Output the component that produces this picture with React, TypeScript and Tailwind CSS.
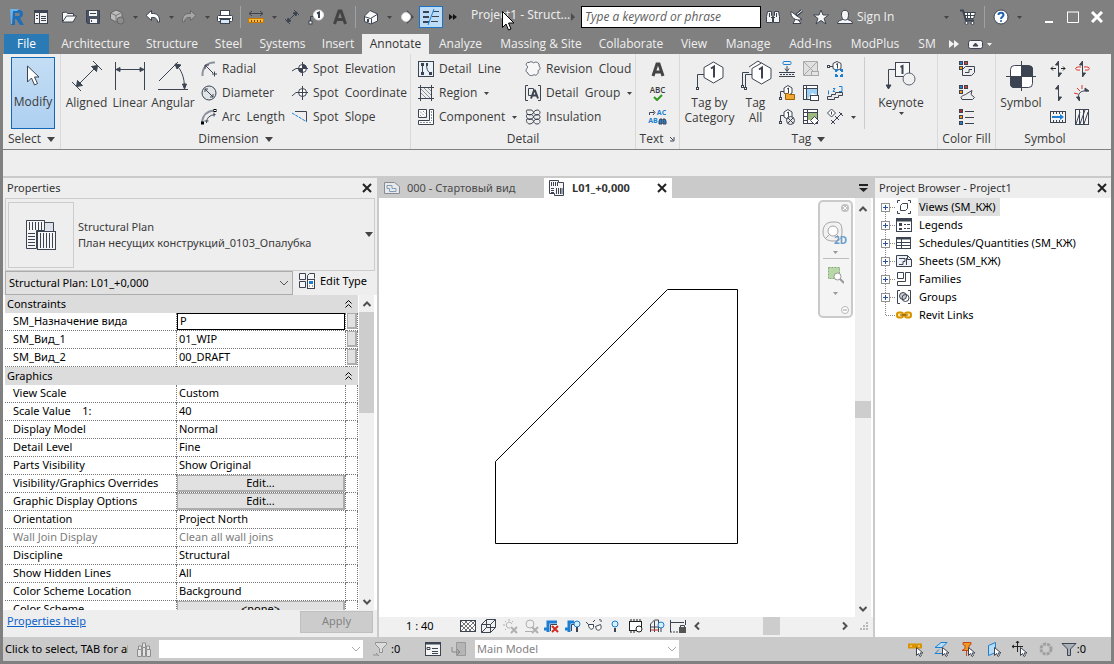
import type { ReactNode } from "react";

const INK = "#3c4452";
const BLUE = "#1b7fd4";

function Icon({
  size = 16,
  w,
  h,
  children,
}: {
  size?: number;
  w?: number;
  h?: number;
  children: ReactNode;
}) {
  const width = w ?? size;
  const height = h ?? size;
  return (
    <svg
      width={width}
      height={height}
      viewBox={`0 0 ${width} ${height}`}
      fill="none"
      stroke={INK}
      className="shrink-0"
      aria-hidden="true"
    >
      {children}
    </svg>
  );
}

function Caret({ color = "#444444" }: { color?: string }) {
  return (
    <Icon w={5} h={3}>
      <path d="M0 0h5L2.5 3z" fill={color} stroke="none" />
    </Icon>
  );
}

function BigCaret({ color = "#444444" }: { color?: string }) {
  return (
    <Icon w={8} h={5}>
      <path d="M0 0h8L4 5z" fill={color} stroke="none" />
    </Icon>
  );
}

function CloseIcon() {
  return (
    <Icon size={10}>
      <path d="M1 1l8 8M9 1L1 9" stroke="#222" strokeWidth="2" />
    </Icon>
  );
}

function Chevron({ dir, color = "#505050" }: { dir: "up" | "down" | "left" | "right"; color?: string }) {
  const paths = {
    up: "M1.500 7L5 3.500 8.500 7",
    down: "M1.500 3L5 6.500 8.500 3",
    left: "M7 1.500L3.500 5 7 8.500",
    right: "M3 1.500L6.500 5 3 8.500",
  };
  return (
    <Icon size={10}>
      <path d={paths[dir]} stroke={color} strokeWidth="2" />
    </Icon>
  );
}

/* ---------- title bar ---------- */

function QuickButton({ label, children }: { label: string; children: ReactNode }) {
  return (
    <button type="button" aria-label={label} className="flex h-6 w-6 items-center justify-center">
      {children}
    </button>
  );
}

function DropButton({ label }: { label: string }) {
  return (
    <button type="button" aria-label={label} className="flex h-6 w-3 items-center justify-center">
      <Caret />
    </button>
  );
}

function Divider() {
  return <div className="mx-[3px] h-[22px] w-px bg-[#9ba3a5]" />;
}

function TitleBar() {
  return (
    <header className="flex h-[34px] shrink-0 items-center pl-[5px]">
      <QuickButton label="Application menu">
        <Icon>
          <path d="M3 1h7c3 0 4 2 4 4s-1 3-3 4l4 7h-4l-4-6H6v6H2V3z" fill="#1f6fb8" stroke="none" />
          <path d="M6 4h4c1 0 1 3 0 3H6z" fill="#808080" stroke="none" />
          <path d="M1 0h9l-2 2H4L3 15H2z" fill="#6bb3ea" stroke="none" />
        </Icon>
      </QuickButton>
      <QuickButton label="Properties">
        <Icon>
          <rect x="1.5" y="1.5" width="13" height="13" fill="#f2f2f2" />
          <path d="M2 3h12" strokeWidth="2" />
          <path d="M6.5 4v10M8 7.5h5M8 9.5h5M8 11.5h5M3 6.5h2M3 9.5h2" />
        </Icon>
      </QuickButton>
      <div className="flex pl-1">
        <QuickButton label="Open">
          <Icon>
            <path d="M1.5 13V3.500l4-.5 1 1.500h6v3" fill="#f7f7f7" />
            <path d="M1.500 13l4-6h10l-3.500 6z" fill="#f7f7f7" />
          </Icon>
        </QuickButton>
        <QuickButton label="Save">
          <Icon>
            <path d="M1.5 1.500h13v13h-12l-1-1z" fill="#4a5363" />
            <rect x="4" y="2" width="8" height="5" fill="#f4f4f4" stroke="none" />
            <rect x="5" y="10" width="7" height="4" fill="#f4f4f4" stroke="none" />
            <path d="M5 4.500h6M6.500 11v2" />
          </Icon>
        </QuickButton>
        <QuickButton label="Synchronize">
          <Icon>
            <path d="M1.500 4L7 1l6 2.500v6L7 13l-5.500-3z" fill="#bcbcbc" stroke="#666" />
            <path d="M1.500 4L7 6.500l6-3M7 6.500V13" stroke="#777" />
            <circle cx="11.500" cy="11.500" r="3.500" fill="#8d8d8d" stroke="#666" />
          </Icon>
        </QuickButton>
        <DropButton label="Synchronize options" />
        <QuickButton label="Undo">
          <Icon>
            <path d="M1 6.500L6.500 1.500v3C12 4 15 7 14.500 13h-2c0-3-2-5-6-4.500v3z" fill="#fff" />
          </Icon>
        </QuickButton>
        <DropButton label="Undo list" />
        <QuickButton label="Redo">
          <Icon>
            <path d="M15 6.500L9.500 1.500v3C4 4 1 7 1.500 13h2c0-3 2-5 6-4.500v3z" fill="#a5a5a5" stroke="#6a6a6a" />
          </Icon>
        </QuickButton>
        <DropButton label="Redo list" />
        <QuickButton label="Print">
          <Icon>
            <rect x="3.500" y="1.500" width="9" height="6" fill="#fff" />
            <rect x=".5" y="6.500" width="15" height="6" rx="1" fill="#fff" />
            <rect x="3.500" y="10.500" width="9" height="4" fill="#d9e8f5" />
            <path d="M2 9.500h12" />
          </Icon>
        </QuickButton>
      </div>
      <Divider />
      <div className="flex">
        <QuickButton label="Measure">
          <Icon>
            <path d="M1 4.500h14M4 2L1 4.500 4 7M12 2l3 2.500L12 7" />
            <rect x=".5" y="9.500" width="15" height="4" fill="#f6b73c" stroke="#c47a00" />
            <path d="M3.500 11v2M6.500 11v2M9.500 11v2M12.500 11v2" stroke="#7a4d00" />
          </Icon>
        </QuickButton>
        <DropButton label="Measure options" />
        <QuickButton label="Aligned dimension">
          <Icon>
            <path d="M3 13L13 3M1 10l5 5M10 1l5 5" />
            <path d="M3 13l1-4 3 3zM13 3l-1 4-3-3z" fill={INK} />
          </Icon>
        </QuickButton>
        <QuickButton label="Tag by category">
          <Icon>
            <path d="M2.500 13V7.500H6" />
            <rect x="1" y="12" width="3" height="3" fill="#fff" />
            <circle cx="10.500" cy="6" r="5" fill="#fff" stroke="#e5e5e5" />
            <path d="M9 4.500l2-1V9" strokeWidth="2" />
          </Icon>
        </QuickButton>
        <QuickButton label="Text">
          <Icon>
            <path d="M2.500 15L7 2h2l4.500 13M4 10.500h8" strokeWidth="3" stroke="#444" />
          </Icon>
        </QuickButton>
      </div>
      <Divider />
      <div className="flex items-center">
        <QuickButton label="Default 3D view">
          <Icon>
            <path d="M1.500 7L7 1.500 14.500 5v7L8 15l-6.500-2.500z" fill="#f8f8f8" />
            <path d="M1 7.500l6.500 2L15 5M8.500 9.500V15" />
            <path d="M5 10v3" strokeWidth="2" />
          </Icon>
        </QuickButton>
        <DropButton label="3D view options" />
        <QuickButton label="Section">
          <Icon>
            <path d="M8 1l7 7-7 7z" fill="#4a4f59" stroke="none" />
            <circle cx="7" cy="8" r="4.500" fill="#fff" stroke="#d0d0d0" />
          </Icon>
        </QuickButton>
        <button
          type="button"
          aria-label="Thin lines"
          aria-pressed="true"
          className="flex h-[22px] w-6 items-center justify-center border border-[#1d74c4] bg-[#bcdcf7]"
        >
          <Icon>
            <path d="M0 3h6M0 8h6M0 13h6" strokeWidth="2" />
            <path d="M10 2.500h6M9 7.500h7M8 12.500h7" />
            <path d="M11 0L5 16" stroke={BLUE} />
          </Icon>
        </button>
        <button type="button" aria-label="Customize" className="flex h-6 w-5 items-center justify-center">
          <Icon w={8} h={6}>
            <path d="M0 0l4 3-4 3zM4 0l4 3-4 3z" fill="#111" stroke="none" />
          </Icon>
        </button>
      </div>
      <h1 className="ml-2 w-[100px] shrink-0 whitespace-nowrap pb-1 text-xs text-[#ececec]">Project1 - Struct...</h1>
      <Icon w={4} h={8}>
        <path d="M0 0l4 4-4 4z" fill="#4d4d4d" stroke="none" />
      </Icon>
      <input
        type="text"
        aria-label="Search"
        placeholder="Type a keyword or phrase"
        className="ml-[6px] h-[22px] w-[180px] border border-black bg-white px-[3px] pb-px font-['Open_Sans',sans-serif] text-xs italic placeholder:text-[#5e5e5e]"
      />
      <div className="flex">
        <QuickButton label="Find">
          <Icon>
            <path d="M2.500 2.500h4v4l1 1v6h-6v-6zM9.500 2.500h4l1 5v6h-6v-6l1-1z" fill="#f2f2f2" />
            <path d="M6 8.500h4M4.500 4v4M11.500 4v4" />
          </Icon>
        </QuickButton>
        <QuickButton label="Communication center">
          <Icon>
            <path d="M4 14.500h8L8.500 10h-2z" fill="#fff" />
            <path d="M2 2.500c-1 6 5 10 11 8z" fill="#fff" />
            <path d="M7 6.500l6-5" strokeWidth="3" />
            <path d="M8 5.500l5-4" stroke="#fff" />
          </Icon>
        </QuickButton>
        <QuickButton label="Favorites">
          <Icon>
            <path d="M8 1l2 5h5.500l-4.500 3.500 2 5.500-5-3.500L3 15l2-5.500L.5 6H6z" fill="#f6f6f6" />
          </Icon>
        </QuickButton>
        <button type="button" className="flex h-6 items-center gap-1 pl-1 font-['Open_Sans',sans-serif] text-xs text-[#f0f0f0]">
          <Icon>
            <path d="M.5 14.500c0-3 3-3 5-4h5c2 1 5 1 5 4z" fill="#f6f6f6" />
            <path d="M4.500 5c0-5 7-5 7 0s-1.500 6-3.500 6-3.500-2-3.500-6z" fill="#f6f6f6" />
          </Icon>
          Sign In
        </button>
      </div>
      <div className="ml-auto flex items-center pr-[5px]">
        <DropButton label="Account options" />
        <div className="w-1" />
        <QuickButton label="App store">
          <Icon>
            <path d="M4 3.500h11.500l-2 6H5.500z" fill="#fff" />
            <path d="M0 1.500h3l3 10h8" strokeWidth="2" />
            <path d="M7.500 4v5M10.500 4v5M5 6.500h9" />
            <circle cx="6.500" cy="14" r="1.500" fill="#fff" />
            <circle cx="12.500" cy="14" r="1.500" fill="#fff" />
          </Icon>
        </QuickButton>
        <div className="px-px">
          <Divider />
        </div>
        <QuickButton label="Help">
          <Icon>
            <circle cx="8" cy="8" r="7" fill="#fff" />
            <path d="M5.500 6c0-3 5-3 5 0 0 1.500-2.500 2-2.500 4" stroke="#1b62b5" strokeWidth="2" />
            <circle cx="8" cy="12" r="1" fill="#1b62b5" stroke="none" />
          </Icon>
        </QuickButton>
        <DropButton label="Help options" />
        <div className="flex pl-3">
          <QuickButton label="Minimize">
            <Icon w={10} h={14}>
              <path d="M1 12h8" stroke="#fff" strokeWidth="2" />
            </Icon>
          </QuickButton>
          <QuickButton label="Maximize">
            <Icon w={12} h={12}>
              <path d="M.5 1v10.500h11V1M0 1h12" stroke="#fff" />
            </Icon>
          </QuickButton>
          <QuickButton label="Close">
            <Icon w={12} h={12}>
              <path d="M1 1l10 10M11 1L1 11" stroke="#fff" strokeWidth="3" />
            </Icon>
          </QuickButton>
        </div>
      </div>
    </header>
  );
}

/* ---------- ribbon tabs ---------- */

const tabs = [
  { label: "File", width: "w-[45px] mr-1" },
  { label: "Architecture", width: "w-[85px]" },
  { label: "Structure", width: "w-[68px]" },
  { label: "Steel", width: "w-[45px]" },
  { label: "Systems", width: "w-[63px]" },
  { label: "Insert", width: "w-[48px]" },
  { label: "Annotate", width: "w-[67px]" },
  { label: "Analyze", width: "w-[63px]" },
  { label: "Massing & Site", width: "w-[98px]" },
  { label: "Collaborate", width: "w-[82px]" },
  { label: "View", width: "w-[44px]" },
  { label: "Manage", width: "w-[64px]" },
  { label: "Add-Ins", width: "w-[61px]" },
  { label: "ModPlus", width: "w-[68px]" },
  { label: "SM", width: "w-[36px]" },
];

function RibbonTabs() {
  return (
    <nav className="flex h-5 shrink-0 items-stretch pl-1 font-['Open_Sans','Noto_Sans',sans-serif] text-xs">
      {tabs.map((tab) => {
        const tone =
          tab.label === "Annotate"
            ? "bg-[#eeeeee] text-[#333333]"
            : tab.label === "File"
              ? "bg-[#2a7ab5] text-white"
              : "text-[#f0f0f0]";
        return (
          <button key={tab.label} type="button" className={`shrink-0 whitespace-nowrap ${tab.width} ${tone}`}>
            {tab.label}
          </button>
        );
      })}
      <button type="button" aria-label="More tabs" className="flex w-[18px] items-center justify-center">
        <Icon w={10} h={8}>
          <path d="M0 0l5 4-5 4zM5 0l5 4-5 4z" fill="#f4f4f4" stroke="none" />
        </Icon>
      </button>
      <button type="button" aria-label="Minimize ribbon" className="flex items-center gap-1 pl-[5px]">
        <Icon w={15} h={9}>
          <rect x=".5" y=".5" width="14" height="8" rx="2" fill="#f4f4f4" />
          <path d="M5 6l2.500-3L10 6z" fill={INK} />
        </Icon>
        <Caret color="#f4f4f4" />
      </button>
    </nav>
  );
}

/* ---------- ribbon ---------- */

function Panel({
  title,
  width,
  caret,
  launcher,
  children,
}: {
  title: string;
  width: string;
  caret?: boolean;
  launcher?: boolean;
  children: ReactNode;
}) {
  return (
    <section className={`flex shrink-0 flex-col border-r border-[#d9d9d9] pt-[3px] ${width}`}>
      <div className="flex h-[72px]">{children}</div>
      <div className="flex h-5 items-center justify-center gap-[6px] whitespace-nowrap">
        {title}
        {caret ? <BigCaret /> : null}
        {launcher ? (
          <Icon size={6}>
            <path d="M1 1l3 3M5 1v4H1" />
          </Icon>
        ) : null}
      </div>
    </section>
  );
}

function BigButton({
  label,
  width,
  caret,
  children,
}: {
  label: string;
  width: string;
  caret?: boolean;
  children: ReactNode;
}) {
  return (
    <button type="button" className={`flex h-[72px] shrink-0 flex-col items-center ${width}`}>
      <span className="flex h-[38px] items-center justify-center">{children}</span>
      <span className="whitespace-pre leading-[15px]">{label}</span>
      {caret ? (
        <span className="pt-[2px]">
          <Caret />
        </span>
      ) : null}
    </button>
  );
}

function SmallButton({ label, caret, icon }: { label: string; caret?: boolean; icon: ReactNode }) {
  return (
    <button type="button" className="flex h-6 items-center gap-[5px] whitespace-pre">
      {icon}
      {label}
      {caret ? (
        <span className="pl-[2px]">
          <Caret />
        </span>
      ) : null}
    </button>
  );
}

function IconButton({ label, children }: { label: string; children: ReactNode }) {
  return (
    <button type="button" aria-label={label} className="flex h-6 w-6 items-center justify-center">
      {children}
    </button>
  );
}

/* small "1" bubble with a leader, shared by the tag tools */
function TagBubble() {
  return (
    <>
      <path d="M1.500 12V6.500H5" />
      <rect x=".5" y="12.500" width="2" height="2" fill="#fff" />
      <path d="M5 3l4-2.500L13 3v5l-4 2.500L5 8z" fill="#fff" />
      <path d="M8 4l1.500-1v5" />
    </>
  );
}

function Swatch({ x, y, color }: { x: number; y: number; color: string }) {
  return <rect x={x + 0.5} y={y + 0.5} width="3" height="3" fill={color} stroke={INK} />;
}

function Ribbon() {
  return (
    <div className="mx-[3px] flex h-[95px] shrink-0 bg-[#eeeeee] font-['Open_Sans','Noto_Sans',sans-serif] text-xs text-[#3a3a3a]">
      <Panel title="Select" width="w-[58px]" caret>
        <div className="pl-2">
          <button
            type="button"
            className="flex h-[72px] w-11 flex-col items-center border border-[#1467b8] bg-linear-to-b from-[#c3ddf4] to-[#aed0f1]"
          >
            <span className="flex h-9 items-center">
              <Icon w={14} h={22}>
                <path d="M1.500 1v16l4-4 3 7 3-1.500-3-6.500H13z" fill="#fff" />
              </Icon>
            </span>
            Modify
          </button>
        </div>
      </Panel>

      <Panel title="Dimension" width="w-[350px]" caret>
        <BigButton label="Aligned" width="w-[51px]">
          <Icon size={30}>
            <path d="M4 26L26 4M0 21l9 9M21 0l9 9" />
            <path d="M4.500 25.500l1-6 5 5zM25.500 4.500l-1 6-5-5z" fill={INK} />
          </Icon>
        </BigButton>
        <BigButton label="Linear" width="w-[36px]">
          <Icon size={30}>
            <path d="M.5 1v28M29.500 1v28M1 8.500h28" />
            <path d="M1 8.500l4-2v4zM29 8.500l-4-2v4z" fill={INK} />
          </Icon>
        </BigButton>
        <BigButton label="Angular" width="w-[50px]">
          <Icon size={30}>
            <path d="M0 28.500h30M1 20L20 1" />
            <path d="M18 4c5 4 8.500 12 8.500 23" />
            <path d="M17 3l6 1-4 4zM26.500 28l-2-5h4z" fill={INK} />
          </Icon>
        </BigButton>
        <div className="flex w-[94px] flex-col pl-[3px]">
          <SmallButton
            label="Radial"
            icon={
              <Icon>
                <path d="M1.500 15C1 7 6 1 14 1.500" stroke="#8b929d" strokeWidth="2" />
                <path d="M4 4l8 8M4 8V4h4M11 13h5M13.500 10.500v5" />
              </Icon>
            }
          />
          <SmallButton
            label="Diameter"
            icon={
              <Icon>
                <circle cx="8" cy="8" r="7" fill="#e2e5e8" />
                <path d="M4 4l8 8M4 7V4h3M9 12h3V9" />
              </Icon>
            }
          />
          <SmallButton
            label="Arc  Length"
            icon={
              <Icon>
                <path d="M1 13C2 6 6 2 13 1.500" stroke="#8b929d" strokeWidth="2" />
                <path d="M5.500 14c0-5 3-8 9-8.500M3.500 12h4M13 3.500v4" />
                <rect x=".5" y="13" width="2" height="2" fill="#fff" stroke="#000" />
                <rect x="13" y=".5" width="2" height="2" fill="#fff" stroke="#000" />
              </Icon>
            }
          />
        </div>
        <div className="flex flex-col">
          <SmallButton
            label="Spot  Elevation"
            icon={
              <Icon>
                <path d="M0 10l4-2.500h12M10.500 1v14" />
                <circle cx="10.500" cy="7.500" r="4" fill="#fff" />
                <path d="M10.500 7.500v-4a4 4 0 0 1 4 4zM10.500 7.500v4a4 4 0 0 1-4-4z" fill={INK} />
              </Icon>
            }
          />
          <SmallButton
            label="Spot  Coordinate"
            icon={
              <Icon>
                <circle cx="10.500" cy="7.500" r="4" fill="#fff" />
                <path d="M0 11l4-3.500h12M10.500 1v14" />
              </Icon>
            }
          />
          <SmallButton
            label="Spot  Slope"
            icon={
              <Icon>
                <path d="M3 2.500h11.500V12" />
                <path d="M0 4l15 9" stroke={BLUE} strokeDasharray="3 1" />
              </Icon>
            }
          />
        </div>
      </Panel>

      <Panel title="Detail" width="w-[225px]">
        <div className="flex w-[114px] flex-col pl-[7px]">
          <SmallButton
            label="Detail  Line"
            icon={
              <Icon>
                <rect x=".5" y=".5" width="15" height="15" fill="#e8f1f8" />
                <path d="M4.500 3v10M8.500 3c0 6 2 9 5 9.500" />
                <path d="M3 2h3v3H3zM3 11h3v3H3zM8 2h2v3H8zM11 11h3v3h-3z" fill={INK} stroke="none" />
              </Icon>
            }
          />
          <SmallButton
            label="Region"
            caret
            icon={
              <Icon>
                <path d="M0 2.500h16M0 13.500h16M2.500 0v16M13.500 0v16" />
                <path d="M3 8l5 5M3 4l9 9M6 3l7 7M10 3l3 3" stroke="#8b929d" />
              </Icon>
            }
          />
          <SmallButton
            label="Component"
            caret
            icon={
              <Icon>
                <path d="M.5.5h8v8h-8zM.5 11.500h11V.5h4v15H.5z" fill="#fff" />
                <path d="M2 6l1.500 1.500M2 2.500l5 5M5 2l2.500 2.500M2 13.500h12M13.500 2v10" stroke="#8b929d" strokeDasharray="2 1" />
              </Icon>
            }
          />
        </div>
        <div className="flex flex-col">
          <SmallButton
            label="Revision  Cloud"
            icon={
              <Icon>
                <path
                  d="M3 6C0 4 1 1 4 1.500 6 0 8 1 8.500 2 11 0 15 2 14 5c2 2 1 4-1 4.500 1 3-2 6-4 4-2 2-6 1-6-1.500C0 11 1 8 3 6z"
                  fill="#f7f7f7"
                  stroke="#5c6470"
                />
              </Icon>
            }
          />
          <SmallButton
            label="Detail  Group"
            caret
            icon={
              <Icon>
                <path d="M3 .5H.5v15H3M13 .5h2.500v15H13" />
                <path d="M8.500 5V3.500h-5v7H6" />
                <path d="M6 13.500l3-8h1l3 8M7 10.500h5" strokeWidth="2" />
              </Icon>
            }
          />
          <SmallButton
            label="Insulation"
            icon={
              <Icon>
                <path d="M2 1h4c3 0 2 5 6 5s4-5 0-5-3 5-7 5-4-5-3-5M2 5.500h4c3 0 2 5 6 5s4-5 0-5-3 5-7 5-4-5-3-5M2 10h4c3 0 2 5 6 5s4-5 0-5-3 5-7 5-4-5-3-5" />
              </Icon>
            }
          />
        </div>
      </Panel>

      <Panel title="Text" width="w-[44px]" launcher>
        <div className="flex flex-1 flex-col items-center">
          <IconButton label="Text">
            <Icon>
              <path d="M3 15L7 3h2l4 12M4.500 11h7" strokeWidth="3" stroke="#444" />
            </Icon>
          </IconButton>
          <button type="button" aria-label="Spell check" className="flex h-6 w-6 flex-col items-center justify-center">
            <span className="text-[8px] font-semibold leading-[8px]">ABC</span>
            <Icon w={10} h={7}>
              <path d="M1 3l3 3 5-5" stroke="#2f9a1c" strokeWidth="2" />
            </Icon>
          </button>
          <button type="button" aria-label="Find and replace" className="flex h-6 w-6 flex-col items-center justify-center">
            <span className="flex items-center gap-px text-[7px] font-bold leading-[8px] text-[#1b7fd4]">
              <Icon w={7} h={6}>
                <path d="M.5 5V2.500H5M4 0l2 2.500L4 5" />
              </Icon>
              AC
            </span>
            <span className="flex items-center text-[7px] font-bold leading-[8px] text-[#1b7fd4]">
              AB
              <Icon w={9} h={8}>
                <path d="M1 7V4l1-2h2v5zM5 7V2h2l1 2v3z" fill={BLUE} />
              </Icon>
            </span>
          </button>
        </div>
      </Panel>

      <Panel title="Tag" width="w-[258px]" caret>
        <BigButton label={"Tag by\nCategory"} width="w-[59px]">
          <Icon w={30} h={32}>
            <path d="M2.500 27V14.500H9" />
            <path d="M9 7.500L18.500 2 28 7.500v10L18.500 23 9 17.500z" fill="#fff" strokeWidth="1" />
            <path d="M16 8.500l3-2v11" strokeWidth="2" />
            <rect x="1.500" y="27.500" width="2" height="2" fill="#fff" />
          </Icon>
        </BigButton>
        <BigButton label={"Tag\nAll"} width="w-[33px]">
          <Icon w={32} h={32}>
            <path d="M2.500 26V12.500H9M5.500 27V14.500H12" />
            <path d="M9 7L18 1l9 6v9" fill="#fff" />
            <path d="M12 8.500L21.500 3 31 8.500v10L21.500 24 12 18.500z" fill="#fff" />
            <path d="M19 9.500l3-2v11" strokeWidth="2" />
            <rect x="1.500" y="25.500" width="2" height="2" fill="#fff" />
            <rect x="4.500" y="27.500" width="2" height="2" fill="#fff" />
          </Icon>
        </BigButton>
        <div className="flex pl-[3px]">
          <div className="flex flex-col">
            <IconButton label="Beam annotations">
              <Icon>
                <rect x="4" y=".5" width="8" height="3" rx="1" stroke={BLUE} />
                <path d="M8 5v5M6 7.500l2 3 2-3M0 11.500h16M0 15.500h16" />
                <path d="M1 13.500h14" strokeDasharray="2 1" />
              </Icon>
            </IconButton>
            <IconButton label="Multi-category tag">
              <Icon>
                <TagBubble />
                <path d="M6.500 8.500h3l1 1h5v5h-9z" fill="#f0a830" stroke="#9c6200" />
              </Icon>
            </IconButton>
            <IconButton label="Material tag">
              <Icon>
                <TagBubble />
                <circle cx="11.500" cy="11.500" r="4" fill="#e6e6e6" />
                <path d="M9 9l5 5M14 9l-5 5" />
              </Icon>
            </IconButton>
          </div>
          <div className="flex flex-col">
            <IconButton label="Area tag">
              <Icon>
                <path d="M.5.5h14v14H.5z" fill="#e0e0e0" stroke="#a8a8a8" />
                <path d="M1 1l13 13M14 1L1 14" stroke="#a8a8a8" />
                <rect x="8.500" y="10.500" width="7" height="4" fill="#e4e4e4" stroke="#a8a8a8" />
              </Icon>
            </IconButton>
            <IconButton label="Room tag">
              <Icon>
                <rect x=".5" y=".5" width="14" height="14" fill="#fff" />
                <path d="M3.500 1v14M1 3.500h13" />
                <path d="M4 4h10v6l-5-2-4 6H4z" fill="#9cd0f5" stroke="none" />
                <rect x="7.500" y="10.500" width="8" height="5" fill="#fff" />
              </Icon>
            </IconButton>
            <IconButton label="Space tag">
              <Icon>
                <rect x=".5" y=".5" width="14" height="14" fill="#fff" />
                <path d="M4.500 1v14M1 3.500h13M1 7.500h3M1 11.500h3" />
                <path d="M5 4h9v7H5z" fill="#9dbb7e" stroke="none" />
                <path d="M11.500 7.500l4 4-4 4-4-4z" fill="#fff" />
              </Icon>
            </IconButton>
          </div>
          <div className="flex flex-col">
            <IconButton label="View reference">
              <Icon>
                <path d="M2 5.500h4" />
                <rect x=".5" y="4.500" width="2" height="2" fill="#fff" />
                <path d="M6 2.500l4-2 4 2v5l-4 2-4-2z" fill="#fff" />
                <path d="M9 3.500l1.500-1v5" />
                <path d="M9 11V9h2M13 9h2v2M9 13v2h2M13 15h2v-2" stroke={BLUE} strokeWidth="2" />
              </Icon>
            </IconButton>
            <IconButton label="Tread number">
              <Icon>
                <path d="M.5 14.500v-3h4v-2h4v-2h7v3h-4v2h-4v2z" fill="#e9e9e9" />
                <path d="M1.500 5.500v4M6 3.500h2l-2 3h2M12 1.500h3v5h-3" stroke={BLUE} />
              </Icon>
            </IconButton>
            <IconButton label="Multi-rebar">
              <Icon>
                <path d="M4.500 0l4 4-4 4-4-4z" fill="#fff" />
                <path d="M4.500 2.500v3M4 15L15 4M4 11l4 4M8 7l4 4M12 3l4 4" />
              </Icon>
            </IconButton>
          </div>
          <div className="flex items-end">
            <DropButton label="Multi-rebar options" />
          </div>
        </div>
        <div className="ml-[5px] flex flex-1 justify-center border-l border-[#cccccc]">
          <BigButton label="Keynote" width="w-[50px]" caret>
            <Icon w={31} h={30}>
              <path d="M2.500 25V8.500H9" />
              <path d="M0 24h5l-2.500 4z" fill={INK} />
              <rect x="9.500" y="1.500" width="14" height="14" fill="#f8f8f8" />
              <path d="M14.500 6l2-1v8" strokeWidth="2" />
              <circle cx="23" cy="18" r="6" fill="#f0f0f2" stroke="#5c6470" />
            </Icon>
          </BigButton>
        </div>
      </Panel>

      <Panel title="Color Fill" width="w-[58px]">
        <div className="flex flex-1 flex-col items-center">
          <IconButton label="Duct legend">
            <Icon>
              <path d="M3.500 8.500l3-3h9v6l-3 3h-9zM6 11.500h4v-3h3" fill="#eee" />
              <Swatch x={0} y={0} color="#1b7fd4" />
              <Swatch x={5} y={0} color="#e03c31" />
              <Swatch x={0} y={5} color="#f39a1f" />
            </Icon>
          </IconButton>
          <IconButton label="Pipe legend">
            <Icon>
              <path d="M2 12.500c0-2 4-2 6-4l5-3-1 4 3.500 3-2 2H3z" fill="#eee" />
              <Swatch x={0} y={0} color="#1b7fd4" />
              <Swatch x={5} y={0} color="#e03c31" />
              <Swatch x={0} y={5} color="#f39a1f" />
            </Icon>
          </IconButton>
          <IconButton label="Color fill legend">
            <Icon>
              <Swatch x={0} y={0} color="#b3282d" />
              <Swatch x={0} y={6} color="#f39a1f" />
              <Swatch x={0} y={12} color="#1b7fd4" />
              <path d="M6 2.500h9M6 8.500h9M6 14.500h9" />
            </Icon>
          </IconButton>
        </div>
      </Panel>

      <section className="flex shrink-0 flex-col pt-[3px]">
        <div className="flex h-[72px]">
          <BigButton label="Symbol" width="w-[50px]">
            <Icon w={30} h={30}>
              <rect x="4.500" y="4.500" width="22" height="22" rx="4" fill="#fff" />
              <path d="M15.500 5h8a3 3 0 0 1 3 3v7.500h-11zM15.500 15.500v11H8a3 3 0 0 1-3.500-3v-8z" fill={INK} />
              <path d="M15.500 0v30M0 15.500h30" />
            </Icon>
          </BigButton>
          <div className="flex flex-col">
            <IconButton label="Span direction">
              <Icon>
                <path d="M8.500 0v16" />
                <path d="M8.500 16v-4h3zM8.500 0v4h-3z" fill={INK} />
                <path d="M6 7.500H1M3 5.500l-2 2 2 2M11 7.500h4M13 5.500l2 2-2 2" stroke="#222" />
              </Icon>
            </IconButton>
            <IconButton label="Beam">
              <Icon>
                <path d="M8.500 0v16" />
                <path d="M8.500 16v-4h3zM8.500 0v4h-3z" fill={INK} />
              </Icon>
            </IconButton>
            <IconButton label="Stair path">
              <Icon>
                <rect x=".5" y="2.500" width="15" height="11" fill="#f5f5f5" />
                <path d="M3.500 3v2M6.500 3v2M9.500 3v2M12.500 3v2M3.500 11v2M6.500 11v2M9.500 11v2M12.500 11v2" />
                <path d="M2 8h10" stroke={BLUE} strokeWidth="2" />
                <path d="M10 5l4 3-4 3z" fill={BLUE} stroke="none" />
              </Icon>
            </IconButton>
          </div>
          <div className="flex flex-col">
            <IconButton label="Area reinforcement">
              <Icon>
                <path d="M8.500 0v16" />
                <path d="M8.500 16v-4h3zM8.500 0v4h-3z" fill={INK} />
                <path d="M7 6C0 5 0 10 6 9M10 6c7-1 7 4 1 3" stroke="#e0352b" />
              </Icon>
            </IconButton>
            <IconButton label="Path reinforcement">
              <Icon>
                <path d="M5.500 15c-3-6 1-10 8-9" />
                <path d="M5.500 16l-3-4h3zM15 6l-4-3v3z" fill={INK} />
                <path d="M0 8l4 1M3 3l3 3M8 0v4" stroke="#e0352b" />
              </Icon>
            </IconButton>
            <IconButton label="Fabric reinforcement">
              <Icon>
                <rect x="1.500" y=".5" width="13" height="15" fill="#f5f5f5" />
                <path d="M5.500 1v14M9.500 1v14M2 15L6 3M6 15l5-14M10 15l4-12" />
              </Icon>
            </IconButton>
          </div>
        </div>
        <div className="flex h-5 items-center justify-center">Symbol</div>
      </section>
    </div>
  );
}

/* ---------- properties palette ---------- */

type PropertyRow = {
  name: string;
  value: string;
  kind?: "input" | "button" | "disabled";
  handle?: boolean;
};

const groups: { title: string; rows: PropertyRow[] }[] = [
  {
    title: "Constraints",
    rows: [
      { name: "SM_Назначение вида", value: "P", kind: "input", handle: true },
      { name: "SM_Вид_1", value: "01_WIP", handle: true },
      { name: "SM_Вид_2", value: "00_DRAFT", handle: true },
    ],
  },
  {
    title: "Graphics",
    rows: [
      { name: "View Scale", value: "Custom" },
      { name: "Scale Value    1:", value: "40" },
      { name: "Display Model", value: "Normal" },
      { name: "Detail Level", value: "Fine" },
      { name: "Parts Visibility", value: "Show Original" },
      { name: "Visibility/Graphics Overrides", value: "Edit...", kind: "button" },
      { name: "Graphic Display Options", value: "Edit...", kind: "button" },
      { name: "Orientation", value: "Project North" },
      { name: "Wall Join Display", value: "Clean all wall joins", kind: "disabled" },
      { name: "Discipline", value: "Structural" },
      { name: "Show Hidden Lines", value: "All" },
      { name: "Color Scheme Location", value: "Background" },
      { name: "Color Scheme", value: "<none>", kind: "button" },
    ],
  },
];

function PropertyValue({ row }: { row: PropertyRow }) {
  if (row.kind === "input") {
    return (
      <input
        aria-label={row.name}
        defaultValue={row.value}
        className="block h-[17px] w-full border border-black bg-white px-[2px] pb-[2px]"
      />
    );
  }
  if (row.kind === "button") {
    return (
      <button
        type="button"
        aria-label={row.name}
        className="block h-[17px] w-full border border-r-2 border-b-2 border-[#adadad] bg-[#e1e1e1] leading-[14px]"
      >
        {row.value}
      </button>
    );
  }
  return <span className="block pl-[2px]">{row.value}</span>;
}

function PropertyGroup({ title, rows }: { title: string; rows: PropertyRow[] }) {
  return (
    <tbody>
      <tr>
        <th colSpan={3} className="h-[18px] bg-[#dcdcdc] p-0 pr-[6px] pl-[2px] text-left font-normal">
          <span className="flex items-center justify-between leading-[18px]">
            {title}
            <Icon w={7} h={8}>
              <path d="M.5 3.500l3-3 3 3M.5 7.500l3-3 3 3" stroke="#000" />
            </Icon>
          </span>
        </th>
      </tr>
      {rows.map((row) => {
        const tone = row.kind === "disabled" ? "text-[#7c7c7c]" : "text-black";
        return (
          <tr key={row.name} className={`align-top ${tone}`}>
            <td className="h-[18px] whitespace-pre border-b border-dotted border-[#777777] p-0 pl-2 leading-4">
              {row.name}
            </td>
            <td className="h-[18px] border-x border-b border-dotted border-[#777777] p-0 leading-4">
              <PropertyValue row={row} />
            </td>
            <td className="h-[18px] border-r border-b border-dotted border-[#777777] p-0">
              {row.handle ? (
                <button
                  type="button"
                  aria-label={`Associate ${row.name}`}
                  className="ml-px block h-4 w-[10px] border border-r-2 border-b-2 border-[#adadad] bg-[#e1e1e1]"
                />
              ) : null}
            </td>
          </tr>
        );
      })}
    </tbody>
  );
}

function PlanIcon() {
  return (
    <Icon w={32} h={32}>
      <path d="M1.500 1.500h18v2h9v9H17" fill="#dfe1ea" />
      <path d="M1.500 1.500h18v10h-8v18h-10z" fill="#f6f6f6" />
      <path d="M4.500 3v8M7.500 3v8M10.500 3v8M13.500 3v8M16.500 3v8M3 14.500h7M3 17.500h7M3 20.500h7M3 23.500h7M3 26.500h7" />
      <rect x="12.500" y="12.500" width="18" height="18" fill="#f6f6f6" />
      <path d="M15.500 14v15M18.500 14v15M21.500 14v15M24.500 14v15M27.500 14v15" />
    </Icon>
  );
}

function Properties() {
  return (
    <aside className="flex w-[374px] shrink-0 flex-col bg-[#eeeeee]">
      <div className="flex h-5 shrink-0 items-center justify-between pr-[5px] pl-1 text-[#333333]">
        <h2>Properties</h2>
        <button type="button" aria-label="Close properties">
          <CloseIcon />
        </button>
      </div>
      <button
        type="button"
        aria-label="Type selector"
        className="mx-[2px] flex h-[73px] shrink-0 items-center border border-[#cccccc] pr-px pl-[2px] text-left text-[#3a3a3a]"
      >
        <span className="flex h-[66px] w-[66px] items-center justify-center border border-[#cccccc]">
          <PlanIcon />
        </span>
        <span className="flex-1 pl-1 leading-4">
          <span className="block">Structural Plan</span>
          <span className="block">План несущих конструкций_0103_Опалубка</span>
        </span>
        <BigCaret />
      </button>
      <div className="flex shrink-0 items-center pl-[2px] text-black">
        <div className="relative">
          <select
            aria-label="Instance"
            className="h-6 w-[288px] appearance-none border border-[#acacac] bg-[#e1e1e1] pl-[3px]"
          >
            <option>Structural Plan: L01_+0,000</option>
          </select>
          <span className="pointer-events-none absolute top-[7px] right-1">
            <Icon size={10}>
              <path d="M1 3l4 4 4-4" stroke="#555" />
            </Icon>
          </span>
        </div>
        <button type="button" className="flex items-center gap-[5px] pb-1 pl-[6px]">
          <Icon>
            <path d="M.5.5h6v6h-6zM.5 8.500h6v6h-6zM8.500 6.500v-4l2-2h5v5" fill="#f5f5f5" />
            <rect x="8.500" y="6.500" width="7" height="9" fill="#fff" />
            <path d="M10 8h4v3h-4z" fill={BLUE} stroke="none" />
            <path d="M10 13h1M13 13h1" />
          </Icon>
          Edit Type
        </button>
      </div>
      <div className="flex min-h-0 flex-1 overflow-hidden bg-white pr-[3px] pl-[2px]">
        <div className="min-w-0 flex-1 overflow-hidden">
          <table className="w-full table-fixed border-separate border-spacing-0">
            <colgroup>
              <col />
              <col className="w-[170px]" />
              <col className="w-[12px]" />
            </colgroup>
            {groups.map((group) => (
              <PropertyGroup key={group.title} title={group.title} rows={group.rows} />
            ))}
          </table>
        </div>
        <div className="ml-px flex w-[15px] flex-col items-center bg-[#f0f0f0]">
          <button type="button" aria-label="Scroll up" className="flex h-[17px] items-center">
            <Chevron dir="up" />
          </button>
          <div className="h-[101px] w-full bg-[#cdcdcd]" />
          <button type="button" aria-label="Scroll down" className="mt-auto flex h-[17px] items-center">
            <Chevron dir="down" />
          </button>
        </div>
      </div>
      <div className="flex h-[27px] shrink-0 items-center justify-between pr-1 pb-1 pl-1">
        <a href="#help" className="text-[#0a62c9] underline">
          Properties help
        </a>
        <button
          type="button"
          disabled
          className="h-[22px] w-[73px] border border-[#bfbfbf] bg-[#cccccc] text-[#838383]"
        >
          Apply
        </button>
      </div>
    </aside>
  );
}

/* ---------- drawing area ---------- */

function NavigationBar() {
  return (
    <div className="absolute top-[2px] right-[2px] flex h-[118px] w-[35px] flex-col items-center rounded-[5px] border-2 border-[#cacaca] bg-[#f4f4f4] py-[2px]">
      <button type="button" aria-label="Close navigation bar" className="self-end pr-[2px]">
        <Icon size={8}>
          <circle cx="4" cy="4" r="4" fill="#c0c0c0" stroke="none" />
          <path d="M2 2l4 4M6 2L2 6" stroke="#fff" />
        </Icon>
      </button>
      <button type="button" aria-label="Steering wheel" className="pt-[9px]">
        <Icon w={28} h={24}>
          <path d="M11 1c7 0 9 1 9 10s-4 9-9 9S1 18 1 11 5 1 11 1z" fill="#f2f2f2" stroke="#a4a4a4" />
          <circle cx="11" cy="10" r="5" fill="#fff" stroke="#a4a4a4" />
          <path d="M4 17l4-4M14 13l3 3" stroke="#a4a4a4" />
          <text x="12" y="23" fontSize="10" fontWeight="bold" fill="#6a9cc9" stroke="none">
            2D
          </text>
        </Icon>
      </button>
      <span className="pt-[6px]">
        <Caret color="#999999" />
      </span>
      <div className="mt-1 h-px w-[26px] shrink-0 bg-[#bdbdbd]" />
      <button type="button" aria-label="Zoom region" className="pt-2">
        <Icon w={16} h={17}>
          <rect x=".5" y=".5" width="11" height="11" fill="#b9d8a8" stroke="#8aa87b" strokeDasharray="2 1" />
          <circle cx="9.500" cy="9.500" r="3.500" fill="#fff" stroke="#999" />
          <path d="M12 12l4 4" stroke="#999" strokeWidth="2" />
        </Icon>
      </button>
      <span className="pt-2">
        <Caret color="#999999" />
      </span>
      <span className="mt-auto self-end pr-[2px]">
        <Icon size={8}>
          <circle cx="4" cy="4" r="3.500" fill="#fff" stroke="#b5b5b5" />
          <path d="M2 4h4" stroke="#999" />
        </Icon>
      </span>
    </div>
  );
}

function ViewControls() {
  const gray = "#b0b0b0";
  const items: { label: string; art: ReactNode }[] = [
    {
      label: "Detail level",
      art: (
        <>
          <rect x=".5" y="2.500" width="15" height="11" fill="#fff" />
          <path d="M1 13L11 3M5 13L15 3M1 9l6-6M9 13l6-6M1 7l6 6M1 3l10 10M5 3l10 10M11 3l4 4" stroke="#777" />
        </>
      ),
    },
    { label: "Visual style", art: <path d="M.5 6.500h9v8h-9zM5.500 1.500h9v8h-9zM.5 6.500l5-5M9.500 6.500l5-5M9.500 14.500l5-5M.5 14.500l5-5" /> },
    {
      label: "Sun path",
      art: (
        <>
          <path d="M7 1v2M1 7h2M3 3l1 1M3 12l1-1M11 3l-1 1M8 10a3 3 0 1 1 2-4" stroke={gray} />
          <path d="M9 9l6 6M15 9l-6 6" stroke={gray} strokeWidth="2" />
        </>
      ),
    },
    {
      label: "Shadows",
      art: (
        <>
          <circle cx="7" cy="6" r="4" stroke={gray} />
          <path d="M2 13.500h7" stroke={gray} />
          <path d="M9 9l6 6M15 9l-6 6" stroke={gray} strokeWidth="2" />
        </>
      ),
    },
    {
      label: "Crop view",
      art: (
        <>
          <path d="M0 11h3M4 14V4h9" strokeWidth="3" stroke={BLUE} />
          <path d="M6.500 13V6.500H13" />
          <path d="M8 8l6 6M14 8l-6 6" stroke="#d02a1e" strokeWidth="2" />
        </>
      ),
    },
    {
      label: "Show crop region",
      art: (
        <>
          <path d="M0 11h3M4 14V4h5" strokeWidth="3" stroke={BLUE} />
          <path d="M6.500 13V6.500H9" />
          <circle cx="12" cy="6" r="3" fill="#d9eefb" stroke={BLUE} />
          <path d="M12 9v5" strokeWidth="2" />
        </>
      ),
    },
    {
      label: "Temporary hide",
      art: (
        <>
          <path d="M0 4l3 3M9 2l-2 2M15 4c1-2-1-3-2-2" />
          <path d="M2.500 6.500h5v3c-1 3-5 2-5-3z" fill="#fff" />
          <path d="M9.500 8.500l5-2c2 4-1 7-4 5z" fill="#fff" />
        </>
      ),
    },
    {
      label: "Reveal hidden",
      art: (
        <>
          <circle cx="8" cy="6" r="3" fill="#d9eefb" stroke={BLUE} />
          <path d="M8 10v4" strokeWidth="2" />
        </>
      ),
    },
    {
      label: "View properties",
      art: (
        <>
          <rect x="1.500" y="3.500" width="12" height="9" fill="#fff" stroke="#222" />
          <path d="M3 3V1M6 3V1M9 3V1M12 3V1M3 15v-2M6 15v-2" stroke="#222" />
          <circle cx="11" cy="11" r="3" fill="#fff" stroke="#222" />
        </>
      ),
    },
    {
      label: "Analytical model",
      art: (
        <>
          <path d="M1.500 14V6l4-4h4v12M1 9h9M5.500 3v11" />
          <path d="M2 12h7" stroke="#d02a1e" />
          <circle cx="12" cy="7" r="3" fill="#d9eefb" stroke={BLUE} />
          <path d="M12 10v4" />
        </>
      ),
    },
    {
      label: "Constraints",
      art: (
        <>
          <path d="M.5 2v12M1 4.500h13M15.500 2v5" />
          <path d="M0 14h8" strokeDasharray="2 1" />
          <rect x="9" y="9" width="7" height="6" fill="#555" stroke="none" />
          <path d="M10.500 9V7.500h4V9" />
        </>
      ),
    },
  ];

  return (
    <div className="flex h-5 shrink-0 items-center bg-[#f0f0f0] pb-[2px] pl-[27px] text-black">
      <button type="button" className="w-[51px] text-left">
        1 : 40
      </button>
      <div className="flex">
        {items.map((item) => (
          <button
            key={item.label}
            type="button"
            aria-label={item.label}
            className="flex h-[18px] w-[21px] items-center justify-center"
          >
            <Icon>{item.art}</Icon>
          </button>
        ))}
      </div>
      <div className="flex h-full flex-1 items-center pl-1">
        <button type="button" aria-label="Scroll left">
          <Chevron dir="left" />
        </button>
        <div className="flex h-full flex-1 justify-center">
          <div className="h-full w-[17px] bg-[#cdcdcd]" />
        </div>
        <button type="button" aria-label="Scroll right">
          <Chevron dir="right" />
        </button>
      </div>
      <div className="flex w-[23px] justify-end pr-[5px]">
        <Icon size={8}>
          <path d="M6 0h2v2H6zM3 3h2v2H3zM6 3h2v2H6zM0 6h2v2H0zM3 6h2v2H3zM6 6h2v2H6z" fill="#b8b8b8" stroke="none" />
        </Icon>
      </div>
    </div>
  );
}

function DrawingArea() {
  return (
    <main className="flex min-w-0 flex-1 flex-col">
      <div className="flex h-5 shrink-0 bg-[#cacaca]">
        <button type="button" className="flex w-[165px] items-center gap-[7px] pl-[5px] text-[#4a4a4a]">
          <Icon>
            <path d="M.5 2.500h10l5 4v7H.5z" fill="#e9e9e9" stroke="#858b95" />
            <path d="M3 5.500h5v3h4v3H5.500v-3H3z" stroke="#7f9cb8" />
          </Icon>
          000 - Стартовый вид
        </button>
        <div className="flex w-32 items-center bg-white pr-[5px] pl-[5px] text-[#333333]">
          <button type="button" className="flex flex-1 items-center gap-[7px] font-bold">
            <Icon>
              <path d="M.5.5h9v2h5v13h-9v-2h-5z" fill="#f6f6f6" />
              <path d="M2.500 2v4M4.500 2v4M6.500 2v4M8.500 2v4M2 8.500h3M2 10.500h3M2 12.500h3M7.500 8v6M9.500 8v6M11.500 8v6M13 8v6" />
            </Icon>
            L01_+0,000
          </button>
          <button type="button" aria-label="Close view">
            <CloseIcon />
          </button>
        </div>
        <button type="button" aria-label="View list" className="ml-auto pr-[5px]">
          <Icon w={9} h={8}>
            <path d="M0 0h9v2H0zM0 4h9L4.500 8z" fill="#222" stroke="none" />
          </Icon>
        </button>
      </div>
      <div className="flex min-h-0 flex-1 bg-white pr-[2px]">
        <div className="relative min-w-0 flex-1 overflow-hidden">
          <svg
            width="244"
            height="256"
            viewBox="0 0 244 256"
            fill="none"
            stroke="#000"
            className="absolute top-[91px] left-[116px]"
            aria-label="Slab outline"
          >
            <path d="M172.500.5h70v254H.5v-82z" />
          </svg>
          <NavigationBar />
        </div>
        <div className="flex w-4 flex-col items-center bg-[#f0f0f0]">
          <button type="button" aria-label="Scroll view up" className="flex h-[21px] items-center">
            <Chevron dir="up" />
          </button>
          <div className="flex w-full flex-1 flex-col justify-center">
            <div className="h-[17px] w-full bg-[#cdcdcd]" />
          </div>
          <button type="button" aria-label="Scroll view down" className="flex h-[17px] items-center">
            <Chevron dir="down" />
          </button>
        </div>
      </div>
      <ViewControls />
    </main>
  );
}

/* ---------- project browser ---------- */

const treeItems: { label: string; leaf?: boolean; art: ReactNode }[] = [
  {
    label: "Views (SM_КЖ)",
    art: (
      <>
        <path d="M4 1.500H1.500V4M12 1.500h2.500V4M4 14.500H1.500V12M12 14.500h2.500V12" />
        <path d="M4.500 6.500l2-2h5v5l-2 2h-5z" fill="#fff" />
      </>
    ),
  },
  {
    label: "Legends",
    art: (
      <>
        <rect x=".5" y="1.500" width="15" height="13" fill="#fff" />
        <path d="M1 3h14" strokeWidth="3" />
        <path d="M8 7.500h2M11 7.500h3M8 11.500h2M11 11.500h3" />
        <path d="M3 6h3v3H3zM3 11h3v2H3z" fill={INK} stroke="none" />
      </>
    ),
  },
  {
    label: "Schedules/Quantities (SM_КЖ)",
    art: (
      <>
        <rect x=".5" y="2.500" width="14" height="11" fill="#fff" />
        <path d="M1 3.500h13" strokeWidth="2" />
        <path d="M1 7.500h14M1 10.500h14M5.500 4v9" />
      </>
    ),
  },
  {
    label: "Sheets (SM_КЖ)",
    art: (
      <>
        <path d="M.5 2.500h11l4 4v7H.5z" fill="#eef2f6" />
        <path d="M3 5.500h6v3h-2v3H3M10.500 5v7M11.500 2.500v4h4" />
      </>
    ),
  },
  {
    label: "Families",
    art: <path d="M1.500 1.500h6v6h-6zM1.500 10.500h8v-9h5v13h-13z" fill="#fff" />,
  },
  {
    label: "Groups",
    art: (
      <>
        <path d="M4 1.500H1.500v13H4M12 1.500h2.500v13H12" />
        <circle cx="7" cy="7" r="3.500" fill="#ccd0d6" />
        <circle cx="9.500" cy="9" r="3.500" />
      </>
    ),
  },
  {
    label: "Revit Links",
    leaf: true,
    art: (
      <>
        <rect x="1" y="5.500" width="6" height="5" rx="2" fill="#ffe9a0" stroke="#d99200" strokeWidth="2" />
        <rect x="9" y="5.500" width="6" height="5" rx="2" fill="#ffe9a0" stroke="#d99200" strokeWidth="2" />
        <path d="M4 8h8" stroke="#7d5200" />
      </>
    ),
  },
];

function ProjectBrowser() {
  return (
    <aside className="flex w-[236px] shrink-0 flex-col bg-white">
      <div className="flex h-5 shrink-0 items-center justify-between bg-[#eeeeee] pr-1 pl-1 text-[#333333]">
        <h2>Project Browser - Project1</h2>
        <button type="button" aria-label="Close browser">
          <CloseIcon />
        </button>
      </div>
      <ul className="pl-[6px] text-black">
        {treeItems.map((item, index) => (
          <li key={item.label} className="flex h-[18px] items-center">
            <button type="button" aria-label={`Expand ${item.label}`} className="shrink-0">
              <Icon w={15} h={18}>
                <path d={item.leaf ? "M4.500 0v9.500H15" : "M4.500 0v18M9 9.500h6"} stroke="#888" strokeDasharray="1 1" />
                {index === 0 ? <path d="M4.500 0v5" stroke="#fff" /> : null}
                {item.leaf ? null : (
                  <>
                    <rect x=".5" y="5.500" width="8" height="8" fill="#fff" stroke="#919191" />
                    <path d="M2 9.500h5M4.500 7v5" stroke="#2a4f9e" />
                  </>
                )}
              </Icon>
            </button>
            <Icon>{item.art}</Icon>
            <span className={`ml-[6px] h-[18px] pr-1 pl-px leading-[17px] ${index === 0 ? "bg-[#dfdfdf]" : ""}`}>
              {item.label}
            </span>
          </li>
        ))}
      </ul>
    </aside>
  );
}

/* ---------- status bar ---------- */

function StatusSelect({ label, value }: { label: string; value: string }) {
  return (
    <div className="relative">
      <select
        aria-label={label}
        className="block h-[18px] w-[204px] appearance-none bg-white pl-[2px] text-[#838383]"
      >
        <option>{value}</option>
      </select>
      <span className="pointer-events-none absolute top-1 right-[2px]">
        <Icon size={10}>
          <path d="M1 3l4 4 4-4" stroke="#aaa" />
        </Icon>
      </span>
    </div>
  );
}

function PickIcon({ label, children }: { label: string; children: ReactNode }) {
  return (
    <button type="button" aria-label={label} className="flex w-[26px] items-center justify-center">
      <Icon>
        {children}
        <path d="M8.500 6.500v8l2-2 1.500 3 1.500-1-1.500-2.500h3z" fill="#fff" />
      </Icon>
    </button>
  );
}

function StatusBar() {
  return (
    <footer className="mx-[3px] flex h-6 shrink-0 items-center bg-[#cacaca] pl-[2px] text-black">
      <p className="w-[123px] shrink-0 overflow-hidden whitespace-nowrap">Click to select, TAB for alternates</p>
      <div className="flex w-[31px] shrink-0 justify-center">
        <Icon>
          <path d="M1.500 8.500h4v7h-4zM6.500 6.500h3v9h-3zM10.500 8.500h4v7h-4zM2.500 8V5h3v3M10.500 8V5h3v3M6.500 6V2h3v4" fill="#e2e2e2" stroke="#8e8e8e" />
        </Icon>
      </div>
      <StatusSelect label="Workset" value="" />
      <div className="flex w-[60px] shrink-0 items-center gap-[3px] pl-[9px]">
        <Icon>
          <path d="M3.500 1.500h11v2l-4 4v4h-3v-4l-4-4zM1 14h5M4 12l3 3" fill="#dcdcdc" stroke="#929292" />
        </Icon>
        :0
      </div>
      <div className="flex w-[52px] shrink-0 items-center gap-[10px] pl-[2px]">
        <Icon>
          <rect x=".5" y="1.500" width="15" height="13" fill="#f5f5f5" />
          <path d="M1 2.500h14" strokeWidth="2" />
          <path d="M2 6.500h3v2H2zM7 7.500h6M7 10.500h6M7 12.500h6" />
        </Icon>
        <Icon>
          <path d="M5.500 1.500h9v13h-9z" fill="#b5b5b5" stroke="#999" />
          <path d="M1 6v5h7M6 8l3 3-3 3" stroke="#888" />
        </Icon>
      </div>
      <StatusSelect label="Design option" value="Main Model" />
      <div className="ml-auto flex items-center pr-[25px]">
        <PickIcon label="Select links">
          <path d="M1 3.500h5v3H1zM8 3.500h5v3H8zM4 5h6" fill="#ffe9a0" stroke="#d99200" strokeWidth="2" />
        </PickIcon>
        <PickIcon label="Select underlay elements">
          <path d="M1 6.500h7l5-5H7zM1 12.500h7M1 12.500l4-4" fill="#b9dcf5" stroke={BLUE} />
        </PickIcon>
        <PickIcon label="Select pinned elements">
          <path d="M3 1.500h8v2l-2 1v3l3 2H2l3-2v-3l-2-1zM6.500 10v5" fill="#f39a1f" stroke="#c04a1c" />
        </PickIcon>
        <PickIcon label="Select elements by face">
          <path d="M2.500 4.500l7-3v10l-7 3z" fill="#b9dcf5" stroke={BLUE} />
        </PickIcon>
        <PickIcon label="Drag elements on selection">
          <path d="M5.500 0v11M0 5.500h11M4 2l1.500-2L7 2M2 4L0 5.500 2 7" stroke="#222" />
        </PickIcon>
        <div className="flex w-[26px] justify-center">
          <Icon>
            <circle cx="8" cy="8" r="5" stroke="#a0a0a0" strokeWidth="3" strokeDasharray="3 1" />
          </Icon>
        </div>
        <button type="button" className="flex items-center pl-[2px]">
          <Icon>
            <path d="M1 2.500h14L9.500 8v6.500h-3V8z" fill="#aab0b8" />
          </Icon>
          :0
        </button>
      </div>
    </footer>
  );
}

export default function App() {
  return (
    <div className="relative flex h-screen flex-col overflow-hidden bg-[#808080] pb-[3px] font-['Noto_Sans',sans-serif] text-[11px]">
      <TitleBar />
      <RibbonTabs />
      <Ribbon />
      <div className="mx-[3px] mt-px h-[26px] shrink-0 bg-[#eeeeee]" />
      <div className="mx-[3px] flex min-h-0 flex-1 gap-[2px] border-t-2 border-[#cacaca] bg-[#cacaca]">
        <Properties />
        <DrawingArea />
        <ProjectBrowser />
      </div>
      <StatusBar />
      <svg
        width="13"
        height="20"
        viewBox="0 0 13 20"
        className="pointer-events-none absolute top-[11px] left-[502px]"
        aria-hidden="true"
      >
        <path d="M.5.500v16l3.500-3.500 2.500 6 2.500-1-2.500-6H12z" fill="#fff" stroke="#000" />
      </svg>
    </div>
  );
}
